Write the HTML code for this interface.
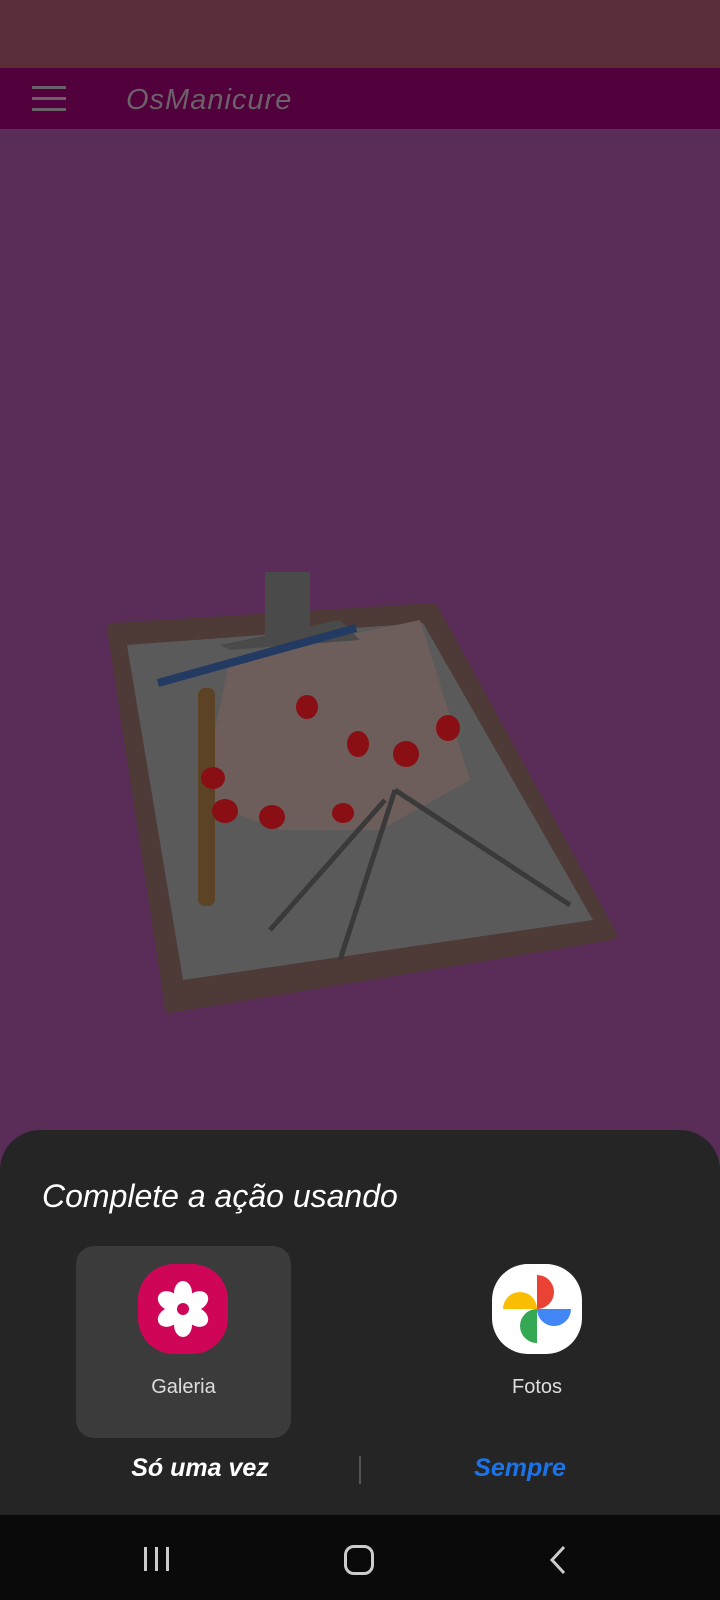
<!DOCTYPE html>
<html><head><meta charset="utf-8"><style>
body{margin:0;width:720px;height:1600px;position:relative;overflow:hidden;background:#5a2d58;font-family:"Liberation Sans",sans-serif}
.status{position:absolute;left:0;top:0;width:720px;height:68px;background:#5a2e39}
.app{position:absolute;left:0;top:68px;width:720px;height:61px;background:#52003b}
.ham{position:absolute;left:32px;width:34px;height:3px;background:#6b6169}
.title{position:absolute;left:126px;top:84px;font-size:29px;color:#6b6169;font-style:italic;letter-spacing:1px}
.sheet{position:absolute;left:0;top:1130px;width:720px;height:400px;background:#252525;border-radius:40px 40px 0 0}
.nav{position:absolute;left:0;top:1515px;width:720px;height:85px;background:#0a0a0a}
</style></head><body>
<div class="status"></div>
<div class="app">
<div class="ham" style="top:18px"></div><div class="ham" style="top:29px"></div><div class="ham" style="top:40px"></div>
</div>
<div class="title">OsManicure</div>
<svg style="position:absolute;left:0;top:0" width="720" height="1130">
<polygon points="112,628 433,608 612,935 170,1008" fill="#4e3a36" stroke="#4e3a36" stroke-width="10" stroke-linejoin="round"/>
<polygon points="127,645 423,623 593,920 183,980" fill="#5a5a5a"/>
<path d="M230,660 L420,620 L470,780 L380,830 L280,830 L200,800 Z" fill="#6e5e5b"/>
<rect x="265" y="572" width="45" height="65" fill="#4a4a4a"/>
<polygon points="220,645 340,620 360,640 230,650" fill="#4a4a4a"/>
<line x1="158" y1="683" x2="356" y2="628" stroke="#233a63" stroke-width="8"/>
<rect x="198" y="688" width="17" height="218" rx="7" fill="#5c4325"/>
<g fill="#8a0f14">
<ellipse cx="213" cy="778" rx="12" ry="11"/><ellipse cx="225" cy="811" rx="13" ry="12"/>
<ellipse cx="272" cy="817" rx="13" ry="12"/><ellipse cx="343" cy="813" rx="11" ry="10"/>
<ellipse cx="307" cy="707" rx="11" ry="12"/><ellipse cx="358" cy="744" rx="11" ry="13"/>
<ellipse cx="406" cy="754" rx="13" ry="13"/><ellipse cx="448" cy="728" rx="12" ry="13"/>
</g>
<path d="M395,790 L570,905 M395,790 L340,960 M385,800 L270,930" stroke="#3a3a3a" stroke-width="5" fill="none"/>
</svg>
<div class="sheet"></div>
<div style="position:absolute;left:42px;top:1178px;font-size:32px;color:#fff;font-style:italic">Complete a ação usando</div>
<div style="position:absolute;left:76px;top:1246px;width:215px;height:192px;background:#3b3b3b;border-radius:18px"></div>
<svg style="position:absolute;left:136px;top:1262px" width="94" height="94" viewBox="0 0 94 94">
<rect x="2" y="2" width="90" height="90" rx="36" fill="#cf0658"/>
<g fill="#fff" transform="translate(47,47)">
<ellipse cx="0" cy="-16" rx="9" ry="12"/><ellipse cx="0" cy="-16" rx="9" ry="12" transform="rotate(60)"/><ellipse cx="0" cy="-16" rx="9" ry="12" transform="rotate(120)"/><ellipse cx="0" cy="-16" rx="9" ry="12" transform="rotate(180)"/><ellipse cx="0" cy="-16" rx="9" ry="12" transform="rotate(240)"/><ellipse cx="0" cy="-16" rx="9" ry="12" transform="rotate(300)"/>
<circle r="12"/>
</g><circle cx="47" cy="47" r="6" fill="#cf0658"/>
</svg>
<div style="position:absolute;left:76px;width:215px;top:1376px;text-align:center;color:#ddd;font-size:20px">Galeria</div>
<svg style="position:absolute;left:490px;top:1262px" width="94" height="94" viewBox="0 0 94 94">
<rect x="2" y="2" width="90" height="90" rx="36" fill="#fff"/>
<path d="M47,47 L47,13 A17,17 0 0 1 47,47Z" fill="#ea4335"/>
<path d="M47,47 L81,47 A17,17 0 0 1 47,47Z" fill="#4285f4"/>
<path d="M47,47 L47,81 A17,17 0 0 1 47,47Z" fill="#34a853"/>
<path d="M47,47 L13,47 A17,17 0 0 1 47,47Z" fill="#fbbc04"/>
</svg>
<div style="position:absolute;left:430px;width:214px;top:1376px;text-align:center;color:#ddd;font-size:20px">Fotos</div>
<div style="position:absolute;left:100px;width:200px;top:1454px;text-align:center;color:#fff;font-size:25px;font-weight:bold;font-style:italic">Só uma vez</div>
<div style="position:absolute;left:359px;top:1456px;width:2px;height:28px;background:#555"></div>
<div style="position:absolute;left:420px;width:200px;top:1454px;text-align:center;color:#1a73e8;font-size:25px;font-weight:bold;font-style:italic">Sempre</div>
<div class="nav">
<div style="position:absolute;left:144px;top:32px;width:3px;height:24px;background:#ccc"></div>
<div style="position:absolute;left:155px;top:32px;width:3px;height:24px;background:#ccc"></div>
<div style="position:absolute;left:166px;top:32px;width:3px;height:24px;background:#ccc"></div>
<div style="position:absolute;left:344px;top:30px;width:24px;height:24px;border:3px solid #ccc;border-radius:10px"></div>
<svg style="position:absolute;left:548px;top:30px" width="20" height="30"><path d="M16,2 L4,15 L16,28" stroke="#ccc" stroke-width="3" fill="none"/></svg>
</div>
</body></html>
